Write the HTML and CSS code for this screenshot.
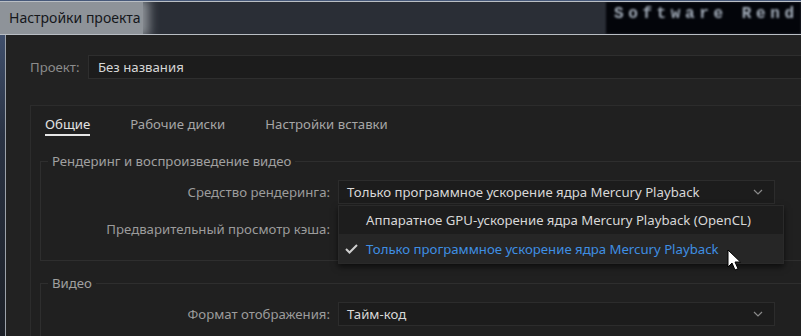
FILE: index.html
```html
<!DOCTYPE html>
<html lang="ru">
<head>
    <meta charset="UTF-8">
    <title>Настройки проекта</title>
    <link rel="stylesheet" href="styles.css">
</head>
<body>
    <div class="titlebar">
        <div class="title">Настройки проекта</div>
        <div class="slate"></div>
        <div class="term">Software Rend</div>
    </div>

    <div class="dialog">
        <div class="project">
            <span class="project-label">Проект:</span>
            <div class="field">Без названия</div>
        </div>

        <div class="panel">
            <div class="tabs">
                <span class="tab active">Общие</span>
                <span class="tab">Рабочие диски</span>
                <span class="tab">Настройки вставки</span>
            </div>

            <fieldset class="group">
                <legend>Рендеринг и воспроизведение видео</legend>
                <div class="row">
                    <span class="row-label">Средство рендеринга:</span>
                    <div class="select">
                        <span class="value">Только программное ускорение ядра Mercury Playback</span>
                        <svg class="chevron" width="10" height="6" viewBox="0 0 10 6"><path d="M1 1l4 4 4-4" fill="none" stroke="#8a8a8a" stroke-width="1.2"/></svg>
                        <!-- open dropdown -->
                        <div class="menu">
                            <div class="item">Аппаратное GPU-ускорение ядра Mercury Playback (OpenCL)</div>
                            <div class="item checked">
                                <svg class="check" width="13" height="10" viewBox="0 0 13 10"><path d="M1 5l3.5 3.5L12 1" fill="none" stroke="#cfcfcf" stroke-width="2"/></svg>
                                Только программное ускорение ядра Mercury Playback
                            </div>
                        </div>
                    </div>
                </div>
                <div class="row">
                    <span class="row-label">Предварительный просмотр кэша:</span>
                    <div class="select"></div>
                </div>
            </fieldset>

            <fieldset class="group">
                <legend>Видео</legend>
                <div class="row">
                    <span class="row-label">Формат отображения:</span>
                    <div class="select">
                        <span class="value">Тайм-код</span>
                        <svg class="chevron" width="10" height="6" viewBox="0 0 10 6"><path d="M1 1l4 4 4-4" fill="none" stroke="#8a8a8a" stroke-width="1.2"/></svg>
                    </div>
                </div>
            </fieldset>
        </div>
    </div>

    <svg class="cursor" width="14" height="22" viewBox="0 0 14 22"><path d="M1 1v17l4-4 3 7 3-1.3-3-6.7h5.5z" fill="#fff" stroke="#000" stroke-width="1"/></svg>
</body>
</html>
```

FILE: styles.css
```css
* {
    box-sizing: border-box;
}
body {
    margin: 0;
    width: 801px;
    height: 336px;
    overflow: hidden;
    position: relative;
    font-family: "Noto Sans", "Open Sans", sans-serif;
    font-size: 13.2px;
    background: linear-gradient(#47597a, #2a3344 40%, #1c2027);
}
.titlebar {
    display: flex;
    margin-top: 1px;
    height: 34px;
    border-top: 1px solid #b9bec4;
    border-bottom: 1px solid #b9bec4;
    background: #2a2e36;
    overflow: hidden;
}
.title {
    padding: 0 2px 0 9px;
    line-height: 32px;
    font-size: 14px;
    color: #15171b;
    background: #8e9399;
    box-shadow: 3px 0 10px 3px #8e9399;
    position: relative;
}
.slate {
    flex: 1;
    background: #2a2e36;
}
.term {
    width: 195px;
    padding-left: 8px;
    background: #03050a;
    color: #a4aebb;
    font: bold 16px "Liberation Mono", monospace;
    letter-spacing: 4.6px;
    line-height: 24px;
    white-space: nowrap;
    filter: blur(1.3px);
}
.dialog {
    margin-left: 5px;
    height: 301px;
    border-left: 1px solid #9ca2aa;
    background: #222222;
    padding: 20px 0 0 24px;
}
.project {
    display: flex;
    align-items: center;
}
.project-label {
    width: 58px;
    color: #8c8c8c;
}
.field {
    flex: 1;
    height: 24px;
    line-height: 22px;
    padding-left: 9px;
    border: 1px solid #2e2e2e;
    border-right: none;
    background: #1c1c1c;
    color: #d6d6d6;
}
.panel {
    margin-top: 26px;
    height: 240px;
    border: 1px solid #2c2c2c;
    border-right: none;
    background: #202020;
    padding: 0 0 0 9px;
}
.tabs {
    display: flex;
    gap: 40px;
    padding: 8px 0 0 5px;
}
.tab {
    line-height: 20px;
    border-bottom: 2px solid transparent;
    color: #a6a6a6;
}
.tab.active {
    color: #e2e2e2;
    border-bottom-color: #e6e6e6;
}
.group {
    margin: 15px 0 0 0;
    min-width: 0;
    border: 1px solid #2e2e2e;
    border-right: none;
    padding: 9px 0 19px 7px;
}
.group + .group {
    margin-top: 12px;
}
legend {
    padding: 0 4px;
    line-height: 20px;
    color: #a0a0a0;
}
.row {
    display: flex;
    align-items: center;
    gap: 8px;
    height: 24px;
}
.row + .row {
    margin-top: 13px;
}
.row-label {
    width: 282px;
    text-align: right;
    color: #9c9c9c;
}
.select {
    position: relative;
    display: flex;
    align-items: center;
    width: 437px;
    height: 24px;
    padding: 0 8px;
    border: 1px solid #2c2c2c;
    background: #1c1c1c;
    color: #d8d8d8;
}
.value {
    flex: 1;
    white-space: nowrap;
}
.chevron {
    margin-right: 3px;
}
.menu {
    position: absolute;
    top: 24px;
    left: -1px;
    width: 446px;
    border: 1px solid #2a2a2a;
    background: #1d1d1d;
    box-shadow: 0 3px 6px rgba(0, 0, 0, 0.6);
    z-index: 2;
}
.item {
    display: flex;
    align-items: center;
    height: 28px;
    padding-left: 27px;
    color: #d8d8d8;
    white-space: nowrap;
}
.item.checked {
    position: relative;
    height: 29px;
    background: #262626;
    color: #3f8fe3;
}
.check {
    position: absolute;
    left: 6px;
    top: 10px;
}
.cursor {
    position: absolute;
    left: 727px;
    top: 249px;
    z-index: 5;
}
```
